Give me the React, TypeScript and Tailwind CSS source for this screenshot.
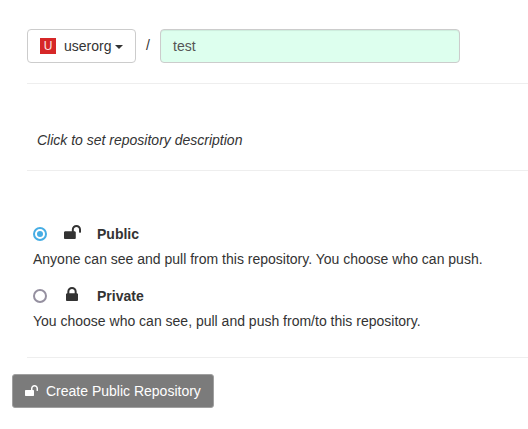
import React from 'react';

function UnlockIcon({ className }: { className: string }) {
  return (
    <svg viewBox="0 256 1664 1408" preserveAspectRatio="none" fill="currentColor" className={className} aria-hidden="true">
      <path d="M1664 704v256q0 26-19 45t-45 19h-64q-26 0-45-19t-19-45v-256q0-106-75-181t-181-75-181 75-75 181v192h96q40 0 68 28t28 68v576q0 40-28 68t-68 28h-960q-40 0-68-28t-28-68v-576q0-40 28-68t68-28h672v-192q0-185 131.500-316.500t316.500-131.500 316.500 131.500 131.500 316.500z" />
    </svg>
  );
}

function LockIcon({ className }: { className: string }) {
  return (
    <svg viewBox="0 128 1152 1408" preserveAspectRatio="none" fill="currentColor" className={className} aria-hidden="true">
      <path d="M320 768h512v-192q0-106-75-181t-181-75-181 75-75 181v192zm832 96v576q0 40-28 68t-68 28h-960q-40 0-68-28t-28-68v-576q0-40 28-68t68-28h32v-192q0-184 132-316t316-132 316 132 132 316v192h32q40 0 68 28t28 68z" />
    </svg>
  );
}

function Radio({ checked }: { checked: boolean }) {
  return (
    <span
      role="radio"
      aria-checked={checked}
      className={
        'flex size-3.5 shrink-0 items-center justify-center rounded-full border-2 ' +
        (checked ? 'border-[#46ade4]' : 'border-[#9590a0]')
      }
    >
      {checked && <span className="size-1.5 rounded-full bg-[#46ade4]" />}
    </span>
  );
}

interface OptionProps {
  checked: boolean;
  icon: React.ReactNode;
  title: string;
  text: string;
}

function VisibilityOption({ checked, icon, title, text }: OptionProps) {
  return (
    <div className="h-[62px] pl-[33px]">
      <div className="flex h-5 items-center">
        <Radio checked={checked} />
        <span className="ml-3 flex w-[26px] justify-center">{icon}</span>
        <span className="ml-3 font-bold">{title}</span>
      </div>
      <p className="mt-[5px] leading-5">{text}</p>
    </div>
  );
}

export default function App() {
  return (
    <main className="h-[429px] w-full overflow-hidden bg-white pt-[29px] font-['Liberation_Sans',Arial,sans-serif] text-sm leading-5 text-[#333]">
      <div className="flex h-[34px] pl-[27px]">
        <button className="flex h-[34px] w-[109px] items-center rounded border border-[#ccc] bg-white pl-3">
          <span className="flex size-4 items-center justify-center bg-[#d62728] text-xs leading-4 text-white/90">U</span>
          <span className="ml-2">userorg</span>
          <span className="ml-1 mt-px border-x-4 border-t-4 border-x-transparent border-t-[#333]" />
        </button>
        <span className="ml-[10px] mt-[6px] w-[14px]">/</span>
        <div className="h-[34px] w-[300px] rounded border border-[#ccc] bg-[#ddffee] px-3 py-[6px] text-[#555] shadow-[inset_0_1px_1px_rgba(0,0,0,0.075)]">test</div>
      </div>
      <hr className="ml-[27px] mt-5 border-[#eee]" />
      <p className="ml-[37px] mt-[46px] italic">Click to set repository description</p>
      <hr className="ml-[27px] mt-5 border-[#eee]" />
      <div className="mt-[53px] h-[133px]">
        <VisibilityOption
          checked
          icon={<UnlockIcon className="mb-1 h-[14px] w-[17px]" />}
          title="Public"
          text="Anyone can see and pull from this repository. You choose who can push."
        />
        <VisibilityOption
          checked={false}
          icon={<LockIcon className="mb-1 h-[14px] w-[12px]" />}
          title="Private"
          text="You choose who can see, pull and push from/to this repository."
        />
      </div>
      <hr className="ml-[27px] border-[#eee]" />
      <button className="ml-3 mt-4 flex h-[34px] w-[202px] items-center rounded-[3px] border border-[#a0a0a0] bg-[#7b7b7b] pl-3 text-white">
        <UnlockIcon className="mb-px h-[11px] w-[13px]" />
        <span className="ml-2">Create Public Repository</span>
      </button>
    </main>
  );
}
